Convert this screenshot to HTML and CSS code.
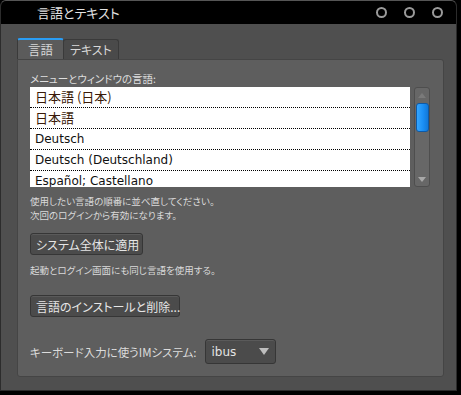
FILE: index.html
```html
<!DOCTYPE html>
<html lang="ja">
  <head>
    <meta charset="utf-8" />
    <title>言語とテキスト</title>
    <link rel="stylesheet" href="styles.css">
  </head>
  <body>
    <div class="window">
      <header class="titlebar">
        <span class="title">言語とテキスト</span>
        <div class="controls">
          <i></i><i></i><i></i>
        </div>
      </header>

      <div class="content">
        <div class="tabs">
          <div class="tab active">言語</div>
          <div class="tab">テキスト</div>
        </div>

        <div class="panel">
          <div class="label">メニューとウィンドウの言語:</div>

          <div class="listbox">
            <ul class="langs">
              <li class="ja">日本語 (日本)</li>
              <li class="ja">日本語</li>
              <li>Deutsch</li>
              <li>Deutsch (Deutschland)</li>
              <li>Español; Castellano</li>
            </ul>
            <div class="scrollbar">
              <span class="arrow up"></span>
              <span class="thumb"></span>
              <span class="arrow down"></span>
            </div>
          </div>

          <p class="hint hint-first">使用したい言語の順番に並べ直してください。<br>次回のログインから有効になります。</p>

          <button class="btn btn-apply">システム全体に適用</button>

          <p class="hint hint-login">起動とログイン画面にも同じ言語を使用する。</p>

          <button class="btn btn-install">言語のインストールと削除...</button>

          <div class="im-row">
            <span class="im-label">キーボード入力に使うIMシステム:</span>
            <div class="combo">
              <span>ibus</span>
              <span class="caret"></span>
            </div>
          </div>
        </div>
      </div>
    </div>
  </body>
</html>
```

FILE: styles.css
```css
/* Dark themed "Language & Text" dialog */
body {
  margin: 0;
  background: #000;
  font-family: "Noto Sans CJK JP", "Noto Sans", sans-serif;
  font-feature-settings: "palt";
  color: #dcdcdc;
}

.window {
  width: 457px;
  height: 391px;
  box-sizing: border-box;
  background: #4f4f4f;
  border: 1px solid #2c2c2c;
  border-top-color: #555;
  border-radius: 6px 6px 0 0;
  display: flex;
  flex-direction: column;
  overflow: hidden;
}

.titlebar {
  height: 23px;
  background: #000;
  display: flex;
  align-items: center;
  justify-content: space-between;
  padding: 0 13px 0 36px;
  flex: none;
}

.title {
  font-size: 13px;
  color: #e2e2e2;
}

.controls {
  display: flex;
  gap: 17px;
}

.controls i {
  width: 7px;
  height: 7px;
  border: 2px solid #9a9a9a;
  border-radius: 50%;
}

.content {
  flex: 1;
  padding: 14px 12px 13px 16px;
  display: flex;
  flex-direction: column;
}

.tabs {
  display: flex;
  align-items: flex-end;
  height: 21px;
}

.tab {
  height: 19px;
  padding: 0 6px;
  font-size: 12px;
  line-height: 19px;
  color: #d8d8d8;
  background: #4a4a4a;
  border: 1px solid #3a3a3a;
  border-bottom: none;
  border-radius: 3px 3px 0 0;
  margin-right: -1px;
}

.tab.active {
  height: 19px;
  padding: 0 10px;
  font-size: 12.5px;
  background: #5b5b5b;
  border-top: 2px solid #2a9df4;
  position: relative;
  z-index: 1;
}

.panel {
  flex: 1;
  background: #5e5e5e;
  border: 1px solid #454545;
  border-radius: 0 3px 3px 3px;
  padding: 11px 12px 0 12px;
}

.label {
  font-size: 10.5px;
  line-height: 16px;
  color: #dedede;
}

.listbox {
  display: flex;
  gap: 4px;
  height: 100px;
}

.langs {
  width: 380px;
  margin: 0;
  padding: 0;
  list-style: none;
  background: #fff;
  overflow: hidden;
}

.langs li {
  height: 20px;
  line-height: 20px;
  padding-left: 5px;
  border-bottom: 1px dotted #000;
  font-family: "DejaVu Sans", "Noto Sans CJK JP", sans-serif;
  font-size: 12px;
  color: #111;
}

.langs li.ja {
  font-family: "Noto Sans CJK JP", sans-serif;
  font-size: 13px;
  color: #3a1a08;
}

.scrollbar {
  width: 16px;
  box-sizing: border-box;
  background: #676767;
  border: 1px solid #4e4e4e;
  border-radius: 3px;
  display: flex;
  flex-direction: column;
  align-items: center;
  padding: 5px 0 4px;
}

.arrow {
  width: 0;
  height: 0;
  border-left: 4px solid transparent;
  border-right: 4px solid transparent;
}

.arrow.up {
  border-bottom: 5px solid #7a7a7a;
}

.arrow.down {
  margin-top: auto;
  border-top: 5px solid #a8a8a8;
}

.thumb {
  width: 13px;
  height: 29px;
  box-sizing: border-box;
  margin-top: 5px;
  background: linear-gradient(90deg, #35a6ff 0%, #1a8ff5 55%, #1278d8 100%);
  border: 1px solid #0d5aa8;
  border-radius: 3px;
}

.hint {
  margin: 7px 0 0;
  font-size: 9.5px;
  line-height: 14px;
  color: #dadada;
}

.btn {
  display: block;
  height: 22px;
  padding: 0 5px;
  background: #4b4b4b;
  border: 1px solid #363636;
  border-radius: 3px;
  box-shadow: inset 0 1px 0 #5a5a5a;
  color: #e6e6e6;
  font-family: inherit;
  font-feature-settings: "palt";
  font-size: 12px;
  white-space: nowrap;
}

.btn-apply {
  margin-top: 11px;
  width: 113px;
}

.hint-login {
  margin-top: 8px;
}

.btn-install {
  margin-top: 18px;
  width: 150px;
}

.im-row {
  margin-top: 22px;
  display: flex;
  align-items: center;
  gap: 8px;
}

.im-label {
  font-size: 11.5px;
  color: #dcdcdc;
}

.combo {
  width: 71px;
  height: 25px;
  box-sizing: border-box;
  background: #4b4b4b;
  border: 1px solid #363636;
  border-radius: 3px;
  box-shadow: inset 0 1px 0 #5a5a5a;
  display: flex;
  align-items: center;
  justify-content: space-between;
  padding: 0 6px 0 6px;
  font-family: "DejaVu Sans", sans-serif;
  font-size: 12px;
  color: #e4e4e4;
}

.caret {
  width: 0;
  height: 0;
  border-left: 5px solid transparent;
  border-right: 5px solid transparent;
  border-top: 7px solid #bdbdbd;
}
```
